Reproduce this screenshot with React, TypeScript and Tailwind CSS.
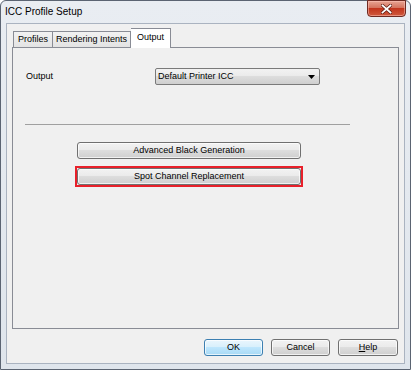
import React from "react";

const font = { fontFamily: '"Liberation Sans", Arial, sans-serif' };

function Btn({ children, w, primary }: { children: React.ReactNode; w: string; primary?: boolean }) {
  return (
    <div
      className={
        "h-[17px] flex items-center justify-center rounded-[3px] border text-[9px] text-black shadow-[inset_0_0_0_1px_rgba(255,255,255,0.7)] " +
        w +
        (primary
          ? " border-[#3c7fb1] bg-[linear-gradient(#eaf6fd_0%,#d9f0fc_45%,#bee6fd_50%,#a7d9f5_100%)]"
          : " border-[#707070] bg-[linear-gradient(#f2f2f2_0%,#ebebeb_45%,#dddddd_50%,#cfcfcf_100%)]")
      }
    >
      {children}
    </div>
  );
}

export default function App() {
  return (
    <div className="w-[411px] h-[370px] overflow-hidden" style={font}>
      <div className="w-[411px] h-[370px] flex flex-col border border-[#5b6472] rounded-t-[6px] bg-[linear-gradient(#e9edf2,#dfe5ec)]">
        {/* title bar */}
        <div className="h-[22px] flex items-start justify-between">
          <div className="pl-[4px] pt-[5px] text-[10px] leading-[12px] text-black">ICC Profile Setup</div>
          <div className="mr-[4px] w-[39px] h-[17px] -mt-[1px] rounded-b-[4px] border border-[#6e2a22] bg-[linear-gradient(#e8a493_0%,#d4735e_45%,#c2351d_50%,#cf5a3e_100%)] flex items-center justify-center shadow-[inset_0_0_0_1px_rgba(255,200,190,0.5)]">
            <svg width="11" height="10" viewBox="0 0 11 10">
              <path d="M1.5 1.5 L9.5 8.5 M9.5 1.5 L1.5 8.5" stroke="#5a1a12" strokeWidth="3.2" strokeLinecap="square" />
              <path d="M1.5 1.5 L9.5 8.5 M9.5 1.5 L1.5 8.5" stroke="#ffffff" strokeWidth="1.8" strokeLinecap="square" />
            </svg>
          </div>
        </div>
        {/* client */}
        <div className="ml-[5px] mr-[5px] mb-[5px] flex-1 border border-[#aab3c0] bg-[#f0f0f0] flex flex-col">
          <div className="pt-[4px] pl-[5px] pr-[5px]">
            {/* tab row */}
            <div className="flex items-end h-[20px]">
              <div className="w-[1px] h-[1px] bg-[#898c95]" />
              <div className="h-[17px] w-[39px] border border-[#898c95] border-r-0 bg-[linear-gradient(#f2f2f2,#e3e3e3)] text-[9px] leading-[15px] text-center text-black">
                Profiles
              </div>
              <div className="h-[17px] w-[79px] border border-[#898c95] bg-[linear-gradient(#f2f2f2,#e3e3e3)] text-[9px] leading-[15px] text-center text-black">
                Rendering Intents
              </div>
              <div className="h-[20px] w-[40px] border border-b-0 border-l-0 border-[#898c95] bg-white text-[9px] leading-[17px] text-center text-black">
                Output
              </div>
              <div className="flex-1 h-[1px] bg-[#898c95]" />
            </div>
            {/* panel */}
            <div className="h-[281px] border border-t-0 border-[#898c95] flex flex-col">
              <div className="mt-[20px] flex items-center h-[17px]">
                <div className="pl-[13px] w-[142px] text-[9px] text-black">Output</div>
                <div className="w-[165px] h-[17px] rounded-[2px] border border-[#7a7a7a] bg-[linear-gradient(#f2f2f2_0%,#ebebeb_45%,#dddddd_50%,#cfcfcf_100%)] flex items-center justify-between pl-[2px] pr-[4px]">
                  <span className="text-[9px] text-black">Default Printer ICC</span>
                  <svg width="7" height="4" viewBox="0 0 7 4">
                    <path d="M0 0 H7 L3.5 4 Z" fill="#000" />
                  </svg>
                </div>
              </div>
              <div className="mt-[39px] ml-[12px] w-[325px] h-[1px] bg-[#a0a0a0]" />
              <div className="mt-[17px] ml-[64px]">
                <Btn w="w-[224px]">Advanced Black Generation</Btn>
              </div>
              <div className="mt-[7px] ml-[62px] w-[228px] border-2 border-[#e8202a]">
                <Btn w="w-[224px]">Spot Channel Replacement</Btn>
              </div>
            </div>
          </div>
          {/* bottom buttons */}
          <div className="mt-[10px] flex justify-end pr-[6px] gap-[8px]">
            <Btn w="w-[59px]" primary>
              OK
            </Btn>
            <Btn w="w-[59px]">Cancel</Btn>
            <Btn w="w-[60px]">
              <span>
                <span className="underline">H</span>elp
              </span>
            </Btn>
          </div>
        </div>
      </div>
    </div>
  );
}
